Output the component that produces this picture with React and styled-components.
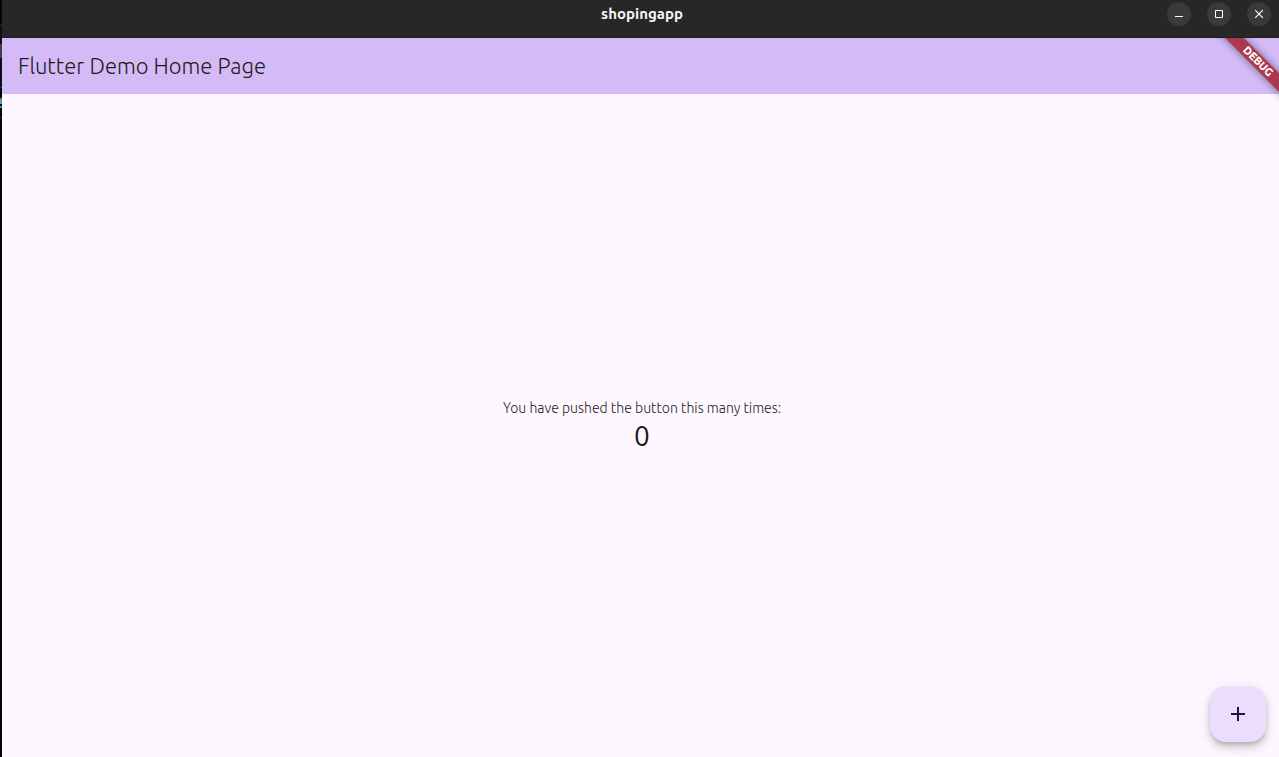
import React, { useState } from "react";
import styled, { createGlobalStyle } from "styled-components";

const GlobalStyle = createGlobalStyle`
  * { box-sizing: border-box; }
  body {
    margin: 0;
    background: #02040a;
    font-family: Ubuntu, "Open Sans", "Noto Sans", sans-serif;
  }
`;

const Desktop = styled.div`
  display: flex;
  min-height: 100vh;
`;

const DesktopEdge = styled.div`
  flex: 0 0 2px;
  background: linear-gradient(
    #02040a 24px, #24272c 24px, #24272c 25px, #0c1016 25px, #0c1016 44px,
    #3c3f44 44px, #3c3f44 58px, #0c1016 58px, #0c1016 87px, #2a2d32 87px,
    #2a2d32 88px, #02040a 88px, #02040a 98px, #8a6a4c 98px, #8a6a4c 100px,
    #4aa0d8 100px, #4aa0d8 104px, #02040a 104px, #02040a 106px,
    #6c7a88 106px, #6c7a88 108px, #02040a 108px, #02040a 117px,
    #2a2d32 117px, #2a2d32 118px, #02040a 118px
  );
`;

const Window = styled.div`
  flex: 1;
  min-width: 0;
  display: flex;
  flex-direction: column;
`;

const TitleBar = styled.header`
  display: grid;
  grid-template-columns: 1fr auto 1fr;
  align-items: start;
  height: 38px;
  padding: 2px 8px 0 11px;
  background: #272727;
  border-bottom: 1px solid #1e1e1e;
`;

const WindowTitle = styled.div`
  grid-column: 2;
  color: #f7f7f7;
  font-size: 15px;
  font-weight: 600;
  line-height: 24px;
`;

const WindowControls = styled.div`
  display: flex;
  justify-content: flex-end;
  gap: 16px;
`;

const WindowButton = styled.button`
  width: 24px;
  height: 24px;
  padding: 0;
  border: 0;
  border-radius: 50%;
  background: #3a3a3a;
  color: #fff;

  svg { display: block; }
`;

const AppView = styled.div`
  position: relative;
  flex: 1;
  display: flex;
  flex-direction: column;
  background: #fef7ff;
`;

const AppBar = styled.div`
  display: flex;
  align-items: center;
  height: 56px;
  padding: 0 16px;
  background: #d4bbf8;
`;

const AppTitle = styled.h1`
  margin: 0;
  color: #1d1b20;
  font-size: 22px;
  font-weight: 300;
  line-height: 28px;
`;

const RibbonCorner = styled.div`
  position: absolute;
  top: 0;
  right: 0;
  width: 64px;
  height: 64px;
  overflow: hidden;
  pointer-events: none;
`;

const Ribbon = styled.div`
  position: absolute;
  top: 17px;
  right: -29px;
  width: 100px;
  height: 13px;
  transform: rotate(45deg);
  background: #ab394d;
  box-shadow: 0 0 8px rgba(0, 0, 0, 0.5);
  color: #fff;
  font-size: 11px;
  font-weight: 800;
  line-height: 13px;
  text-align: center;
`;

const Counter = styled.main`
  flex: 1;
  display: flex;
  flex-direction: column;
  align-items: center;
  justify-content: center;
  padding-left: 3px;
`;

const Message = styled.p`
  margin: 0;
  color: #1d1b20;
  font-size: 14px;
  font-weight: 300;
  line-height: 20px;
`;

const Count = styled.output`
  color: #1d1b20;
  font-size: 28px;
  font-weight: 400;
  line-height: 36px;
`;

const AddButton = styled.button`
  position: absolute;
  right: 13px;
  bottom: 15px;
  display: grid;
  place-items: center;
  width: 56px;
  height: 56px;
  padding: 0;
  border: 0;
  border-radius: 16px;
  background: #ebddfd;
  color: #250f4a;
  box-shadow: 0 3px 5px -1px rgba(0, 0, 0, 0.2),
    0 6px 10px rgba(0, 0, 0, 0.14), 0 1px 18px rgba(0, 0, 0, 0.05);
`;

export default function App() {
  const [count, setCount] = useState(0);

  return (
    <>
      <GlobalStyle />
      <Desktop>
        <DesktopEdge />
        <Window>
          <TitleBar>
            <WindowTitle>shopingapp</WindowTitle>
            <WindowControls>
              <WindowButton aria-label="Minimize">
                <svg width="24" height="24" fill="currentColor">
                  <path d="M8 14h8v1H8z" />
                </svg>
              </WindowButton>
              <WindowButton aria-label="Maximize">
                <svg width="24" height="24" fill="none" stroke="currentColor">
                  <path d="M8.5 8.5h7v7h-7z" />
                </svg>
              </WindowButton>
              <WindowButton aria-label="Close">
                <svg width="24" height="24" fill="none" stroke="currentColor" strokeWidth="1.2">
                  <path d="M8.2 8.2l7.6 7.6M15.8 8.2l-7.6 7.6" />
                </svg>
              </WindowButton>
            </WindowControls>
          </TitleBar>
          <AppView>
            <AppBar>
              <AppTitle>Flutter Demo Home Page</AppTitle>
            </AppBar>
            <Counter>
              <Message>You have pushed the button this many times:</Message>
              <Count>{count}</Count>
            </Counter>
            <RibbonCorner>
              <Ribbon>DEBUG</Ribbon>
            </RibbonCorner>
            <AddButton aria-label="Increment" onClick={() => setCount(count + 1)}>
              <svg width="24" height="24" fill="currentColor">
                <path d="M19 13h-6v6h-2v-6H5v-2h6V5h2v6h6z" />
              </svg>
            </AddButton>
          </AppView>
        </Window>
      </Desktop>
    </>
  );
}
